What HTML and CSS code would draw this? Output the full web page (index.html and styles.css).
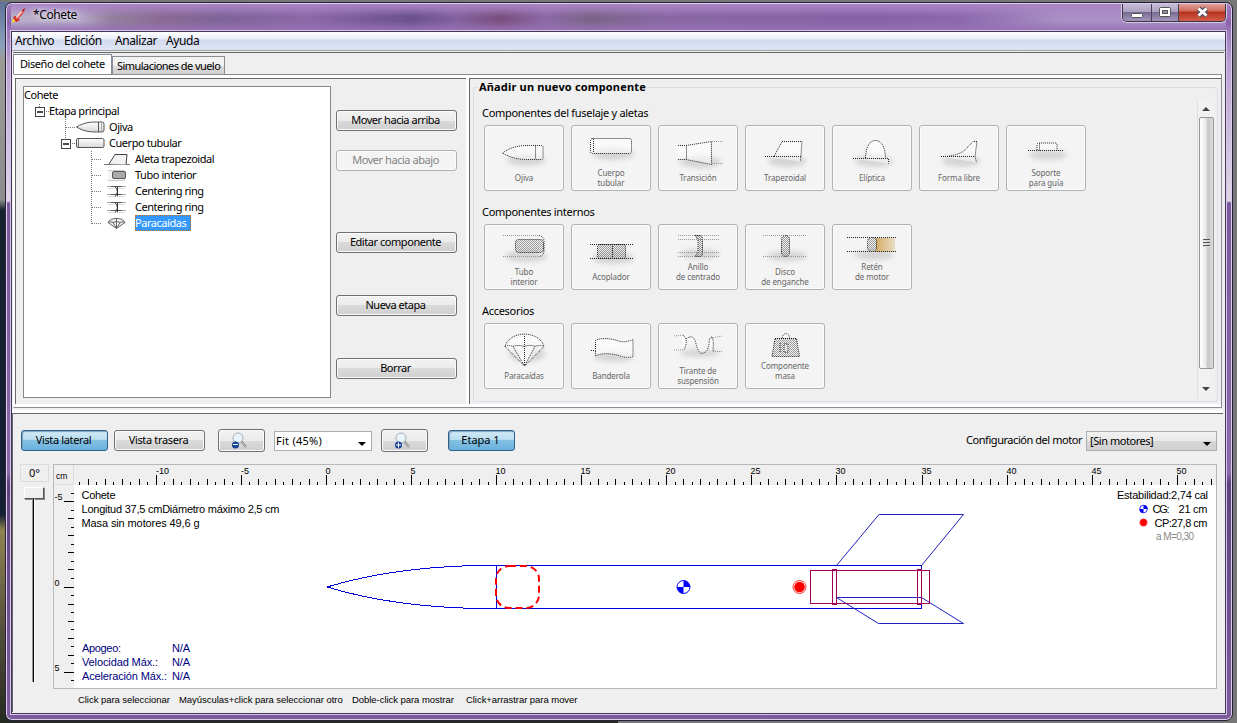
FILE: index.html
```
<!DOCTYPE html>
<html lang="es">
<head>
<meta charset="utf-8">
<title>Cohete</title>
<link rel="stylesheet" href="styles.css">
</head>
<body>
<svg class="defs" width="0" height="0">
  <defs>
    <pattern id="dither" width="2" height="2" patternUnits="userSpaceOnUse"><path d="M0 0h1v1H0zM1 1h1v1H1z" fill="#999"/></pattern>
    <linearGradient id="tan"><stop offset="0" stop-color="#d3ad68"/><stop offset="1" stop-color="#e9dcc4"/></linearGradient>
    <filter id="soft" x="-30%" y="-60%" width="160%" height="220%"><feGaussianBlur stdDeviation="2.5"/></filter>
    <linearGradient id="metal" x1="0" y1="0" x2="0" y2="1"><stop offset="0" stop-color="#fff"/><stop offset="1" stop-color="#d8d8d8"/></linearGradient>
    <symbol id="ring" viewBox="0 0 28 16" overflow="visible"><path d="M4 3.500h19M4 11.500h19" stroke="#aaa"/><path d="M5 5.500h17M5 13.500h17" stroke="#ddd"/><path d="M8 3.500h11M8 11.500h11" stroke="#555"/><path d="M12 3.500c3 2 3 8 0 10M14.500 4v9" stroke="#333" fill="none"/></symbol>
    <symbol id="lens" viewBox="0 0 20 18" overflow="visible"><path d="M11 9l5 6" stroke="#777" stroke-width="2"/><path d="M11 9l5 6" stroke="#ddd"/><circle cx="8" cy="6" r="5" fill="#e8f3fb" stroke="#a4b0ba"/><circle cx="5.500" cy="13" r="3.500" fill="#174395"/></symbol>
  </defs>
</svg>
<div class="window">
  <header class="titlebar">
    <svg class="rocket" width="16" height="16"><path d="M1 15l1-4 3 2-2 1z" fill="#ffd21c"/><path d="M2 9l3-1 4 4-4 2z" fill="#d9201b"/><path d="M4 10L9 4l4-3-1 5-6 6z" fill="#e1574d"/><path d="M5 9l5-6 1 1-5 6z" fill="#fbe9e6"/><path d="M11 2l3-2-1 4z" fill="#c11b17"/></svg>
    <span class="title">*Cohete</span>
    <div class="winbtns">
      <span class="wb min"><svg width="28" height="18"><rect x="8.500" y="9.500" width="11" height="4" rx="1" fill="#fff" stroke="#555"/></svg></span>
      <span class="wb max"><svg width="26" height="18"><rect x="7.500" y="3.500" width="11" height="9" rx="1" fill="#fff" stroke="#555"/><rect x="10.500" y="6.500" width="5" height="3" fill="#968cae" stroke="#555"/></svg></span>
      <span class="wb close"><svg width="46" height="18"><path d="M19.500 4.500l8 7m0-7l-8 7" stroke="#535666" stroke-width="5"/><path d="M19.500 4.500l8 7m0-7l-8 7" stroke="#fff" stroke-width="2.800"/></svg></span>
    </div>
  </header>
  <main class="client">
    <nav class="menu"><span class="m1">Archivo</span><span class="m2">Edición</span><span class="m3">Analizar</span><span class="m4">Ayuda</span></nav>
    <div class="tabs"><div class="tab on">Diseño del cohete</div><div class="tab">Simulaciones de vuelo</div></div>
    <div class="pane">
      <section class="left">
        <div class="tree">
          <svg class="lines" width="100" height="150"><g fill="none" stroke="#777" stroke-dasharray="1 1"><path d="M15.500 17v5M22 24.500h4M41.500 32v26M42 40.500h9M48 56.500h5M67.500 64v73M68 72.500h9M68 88.500h9M68 104.500h9M68 120.500h9M68 136.500h9"/></g><g fill="#fff" stroke="#444"><rect x="11.500" y="20.500" width="9" height="9"/><rect x="37.500" y="52.500" width="9" height="9"/></g><path d="M13 25h6M39 57h6" stroke="#111" stroke-width="1.500"/></svg>
          <div class="row r0">Cohete</div>
          <div class="row r1">Etapa principal</div>
          <div class="row r2"><svg width="29" height="16"><path d="M.5 8C9 3 15 3 23 3h3q2 0 2 2v6q0 2-2 2h-3C15 13 9 13 .5 8zM22.500 3v10" fill="url(#metal)" stroke="#555"/><path d="M25.500 4v8" stroke="#aaa"/></svg><span>Ojiva</span></div>
          <div class="row r2"><svg width="29" height="16"><rect x=".5" y="3.500" width="27.500" height="9" rx="1.500" fill="url(#metal)" stroke="#555"/><path d="M2.500 4v8" stroke="#777"/></svg><span>Cuerpo tubular</span></div>
          <div class="row r3"><svg width="28" height="16"><path d="M1 13.500h26" stroke="#777"/><path d="M6 13l6-9.500h12l-1 10" fill="#f2f2f2" stroke="#444"/></svg><span>Aleta trapezoidal</span></div>
          <div class="row r3"><svg width="28" height="16"><path d="M5 3.500h15q2.500 0 2.500 2v6q0 2-2.500 2H5" stroke="#ccc" fill="#f4f4f4"/><rect x="9.500" y="4.500" width="13" height="7" rx="1.500" fill="#aaa" stroke="#555"/></svg><span>Tubo interior</span></div>
          <div class="row r3"><svg width="28" height="16"><use href="#ring" width="28" height="16"/></svg><span>Centering ring</span></div>
          <div class="row r3"><svg width="28" height="16"><use href="#ring" width="28" height="16"/></svg><span>Centering ring</span></div>
          <div class="row r3"><svg width="28" height="16"><path d="M5 7.500C7 2 20 2 22 7.500L13.500 13.500zM5 7.500q3-1.500 5 0l3.500 6 3.500-6q3-1.500 5 0M10 7.500q3.500-2 7 0M13.500 3.500v10" fill="#eee" stroke="#666"/></svg><span class="sel">Paracaídas</span></div>
        </div>
        <div class="actions">
          <button class="btn">Mover hacia arriba</button>
          <button class="btn off">Mover hacia abajo</button>
          <button class="btn gap">Editar componente</button>
          <button class="btn gap2">Nueva etapa</button>
          <button class="btn gap2">Borrar</button>
        </div>
      </section>
      <section class="right">
        <fieldset class="add">
          <legend>Añadir un nuevo componente</legend>
          <div class="groups">
            <h3>Componentes del fuselaje y aletas</h3>
            <div class="cards">
              <div class="card"><svg><ellipse class="sh" cx="42" cy="35" rx="19" ry="6"/><path class="d" d="M18.500 28C27 22 35 20.500 44 20.500h13.500q1.500 0 1.500 2V33q0 1.500-1.500 1.500H44C35 34.500 27 33 18.500 28zM51.500 20.500v14"/></svg><p>Ojiva</p></div>
              <div class="card two"><svg><ellipse class="sh" cx="42" cy="29" rx="21" ry="6"/><rect class="d" x="19.500" y="13.500" width="41" height="15" rx="2"/><path class="d" d="M22.500 14v14"/></svg><p>Cuerpo<br>tubular</p></div>
              <div class="card"><svg><ellipse class="sh" cx="42" cy="37" rx="21" ry="6"/><path class="d" d="M20 20.500h8l25.500-4v23l-25.500-5h-8M28.500 20.500v14"/><path class="l" d="M54 16.500h12M54 38.500h11"/></svg><p>Transición</p></div>
              <div class="card"><svg><ellipse class="sh" cx="42" cy="36" rx="19" ry="6"/><path class="d" d="M20 31.500h9l8-15h20l-1.500 20M29 31.500h27"/></svg><p>Trapezoidal</p></div>
              <div class="card"><svg><ellipse class="sh" cx="42" cy="36" rx="19" ry="6"/><path class="d" d="M21 33.500h35.500v5M33.500 33C34 21 38 15.500 43.500 15.500S53 21 53.500 33"/></svg><p>Elíptica</p></div>
              <div class="card"><svg><ellipse class="sh" cx="42" cy="36" rx="19" ry="6"/><path class="d" d="M22 31.500h34l1.500 6M30 31Q40 30 46 25L54 16.500h4l-2 15"/></svg><p>Forma libre</p></div>
              <div class="card two"><svg><ellipse class="sh" cx="42" cy="30" rx="19" ry="5"/><path class="d" d="M22 25.500h36M31 25v-5q0-2 2-2h16q2 0 2 2v5M33.500 18.500v7"/></svg><p>Soporte<br>para guía</p></div>
            </div>
            <h3>Componentes internos</h3>
            <div class="cards">
              <div class="card two"><svg><ellipse class="sh" cx="42" cy="32" rx="21" ry="6"/><path class="l" d="M19 11.500h37M19 32.500h37"/><path class="d" d="M55 11.500q5 1 5 6v9q0 5-5 6"/><rect class="d g" x="31.500" y="15.500" width="28" height="13" rx="3"/></svg><p>Tubo<br>interior</p></div>
              <div class="card"><svg><ellipse class="sh" cx="42" cy="34" rx="21" ry="6"/><path class="d" d="M19 20.500h43M19 34.500h43"/><rect class="d g" x="26.500" y="20.500" width="28" height="14" rx="2"/><path class="d" d="M41.500 20v14"/></svg><p>Acoplador</p></div>
              <div class="card up"><svg><ellipse class="sh" cx="42" cy="30" rx="20" ry="5"/><path class="l" d="M20 11.500h42M20 15.500h42M20 28.500h42M20 32.500h42"/><path class="d g" d="M37 11.500h6q1.500 1 1.500 4v13q0 3-1.500 4h-6l3-4v-13z"/></svg><p>Anillo<br>de centrado</p></div>
              <div class="card two"><svg><ellipse class="sh" cx="42" cy="32" rx="20" ry="5"/><path class="l" d="M18 11.500h43M18 32.500h43"/><rect class="d g" x="36.500" y="11.500" width="8" height="21" rx="4"/></svg><p>Disco<br>de enganche</p></div>
              <div class="card up"><svg><ellipse class="sh" cx="42" cy="31" rx="20" ry="5"/><rect x="44" y="14" width="19" height="14" fill="url(#tan)"/><path class="d" d="M15 13.500h49M15 27.500h49"/><rect class="d g" x="35.500" y="13.500" width="9" height="14" rx="4"/></svg><p>Retén<br>de motor</p></div>
            </div>
            <h3>Accesorios</h3>
            <div class="cards">
              <div class="card"><svg><ellipse class="sh" cx="43" cy="31" rx="18" ry="8"/><path class="d" d="M21 23.500C26 7 55 7 60 23.500L40.500 43z"/><path class="d" d="M21 23.500q4-2 8 0 5-2 11 0 6-2 11 0 5-2 9 0M29 23.500L40.500 43 51 23.500M40.500 13v30"/></svg><p>Paracaídas</p></div>
              <div class="card"><svg><ellipse class="sh" cx="43" cy="34" rx="20" ry="5"/><path class="d" d="M20 27.500h4.500V17.500c8-4 19-1 25 1q6 1 12.500-2v17q-6 2-12.500-.5c-7-2-17-4-25 0V27"/></svg><p>Banderola</p></div>
              <div class="card two"><svg><ellipse class="sh" cx="42" cy="30" rx="20" ry="4"/><path class="l" d="M16 13l9-1M16 27h10M53 15l12-2M55 28.500h10"/><path class="d" d="M25 12q6 5 1 15M28 16q8-6 10 5 3 11 7 9 5-1 6-9 0-7 3-7 2 3 1 14"/></svg><p>Tirante de<br>suspensión</p></div>
              <div class="card up"><svg><path class="d g" d="M30 15.500h21.500l3 18H27z"/><path class="d" d="M37.500 15q0-4 3.500-4.500 3.500.5 3.500 4.500M35 20v9M39 21h4v8h-4z"/></svg><p>Componente<br>masa</p></div>
            </div>
          </div>
          <div class="scroll"><i class="arrow upa"></i><div class="thumb"><b></b><b></b><b></b></div><i class="arrow"></i></div>
        </fieldset>
      </section>
    </div>
    <section class="view">
      <div class="tools">
        <button class="btn blue w87">Vista lateral</button>
        <button class="btn w91">Vista trasera</button>
        <button class="btn zoom"><svg width="20" height="18"><use href="#lens" width="20" height="18"/><path d="M3 12.500h5" stroke="#fff" stroke-width="1"/></svg></button>
        <div class="combo fit">Fit (45%)<i></i></div>
        <button class="btn zoom z2"><svg width="20" height="18"><use href="#lens" width="20" height="18"/><path d="M3 13h5M5.500 10.500v5" stroke="#fff"/></svg></button>
        <button class="btn blue w67">Etapa 1</button>
        <span class="conf">Configuración del motor</span>
        <div class="combo motor">[Sin motores]<i></i></div>
      </div>
      <div class="stage">
        <div class="rot"><div class="deg">0°</div><div class="knob"></div><div class="track"></div></div>
        <svg class="plot" width="1164" height="225" viewBox="53 464 1164 225">
          <rect x="53" y="464" width="1164" height="225" fill="#efefef"/>
          <rect x="74" y="485" width="1142" height="203" fill="#fff"/>
          <rect x="53.500" y="464.500" width="1163" height="224" fill="none" stroke="#b8b8b8"/>
          <path d="M54 484.500h20M73.500 465v20" stroke="#dcdcdc"/>
          <text x="56" y="479" font-size="8.500">cm</text>
          <g id="ruler"></g>
          <g fill="none" stroke="#0000dc" shape-rendering="crispEdges">
            <path d="M327 587C370 574 425 566.500 478 565.500H921.500V608.500H478C425 607.500 370 600 327 587M496.500 565.500v43"/>
          </g>
          <g fill="none" stroke="#2020c0"><path d="M836.500 565.500L879 514.500h84.500L921.500 565.500M836.500 597.500L878.500 623.500h85L921.500 597.500z"/></g>
          <g fill="none" stroke="#a0005a" shape-rendering="crispEdges"><rect x="810.500" y="570.500" width="119" height="33"/><rect x="832.500" y="569.500" width="4" height="35"/><rect x="917.500" y="569.500" width="4" height="35"/></g>
          <rect x="496" y="566" width="43" height="42" rx="13" fill="none" stroke="#f00" stroke-width="2" stroke-dasharray="7 4"/>
          <g id="cg"><circle cx="683.500" cy="587" r="6.500" fill="#fff" stroke="#00f"/><path d="M683.500 587v-6.500a6.500 6.500 0 0 1 6.500 6.500zM683.500 587v6.500a6.500 6.500 0 0 1-6.500-6.500z" fill="#00f"/></g>
          <circle cx="799.500" cy="587" r="6.500" fill="#fff" stroke="#f33"/><circle cx="799.500" cy="587" r="5.300" fill="#f00"/>
          <g font-size="11">
            <text x="81.500" y="499" textLength="34">Cohete</text>
            <text x="81.500" y="513" textLength="198">Longitud 37,5 cmDiámetro máximo 2,5 cm</text>
            <text x="81.500" y="527" textLength="118">Masa sin motores 49,6 g</text>
            <text x="1117" y="499" textLength="91">Estabilidad:2,74 cal</text>
            <text x="1152.500" y="513" textLength="17">CG:</text><text x="1178.500" y="513" textLength="29">21 cm</text>
            <text x="1154.500" y="527" textLength="53">CP:27,8 cm</text>
            <text x="1156" y="540" font-size="10" fill="#888" textLength="38">a M=0,30</text>
            <g fill="#000080">
              <text x="82" y="652" textLength="39">Apogeo:</text><text x="172" y="652" textLength="18">N/A</text>
              <text x="82" y="666" textLength="76">Velocidad Máx.:</text><text x="172" y="666" textLength="18">N/A</text>
              <text x="82" y="680" textLength="85">Aceleración Máx.:</text><text x="172" y="680" textLength="18">N/A</text>
            </g>
          </g>
          <circle cx="1143.500" cy="509" r="3.800" fill="#fff" stroke="#33f"/><path d="M1143.500 509v-4a4 4 0 0 1 4 4zM1143.500 509v4a4 4 0 0 1-4-4z" fill="#00f"/>
          <circle cx="1143.500" cy="522.500" r="4.300" fill="#f99"/><circle cx="1143.500" cy="522.500" r="3.400" fill="#f00"/>
        </svg>
      </div>
      <footer class="hints"><span class="h1">Click para seleccionar</span><span class="h2">Mayúsculas+click para seleccionar otro</span><span class="h3">Doble-click para mostrar</span><span class="h4">Click+arrastrar para mover</span></footer>
    </section>
  </main>
</div>
<script src="ruler.js"></script>
</body>
</html>
```
FILE: ruler.js
```
// Ruler ticks every half centimetre; labels every five centimetres.
const scale = 17.015, originX = 326.5, originY = 587;
const ruler = document.getElementById("ruler");
let ticks = "", labels = "";
for (let h = -29; h <= 104; h++) {
  const x = Math.floor(originX + h / 2 * scale) + 0.5;
  const len = h % 10 === 0 ? 10 : h % 2 === 0 ? 6 : 3;
  ticks += `M${x} 485v${-len}`;
  if (h % 10 === 0) labels += `<text x="${x - (h < 0 ? 0.5 : 1)}" y="474">${h / 2}</text>`;
}
for (let h = -11; h <= 11; h++) {
  const y = Math.floor(originY + h / 2 * scale) + 0.5;
  const len = h % 10 === 0 ? 10 : h % 2 === 0 ? 6 : 3;
  ticks += `M74 ${y}h${-len}`;
  if (h % 10 === 0) labels += `<text x="54.500" y="${y - 1.5}">${h / 2}</text>`;
}
ruler.innerHTML = `<path d="${ticks}" stroke="#000" shape-rendering="crispEdges"/><g font-size="9">${labels}</g>`;
```
FILE: styles.css
```
* { box-sizing: border-box; }
body { margin: 0; width: 1237px; height: 723px; overflow: hidden; padding: 2px 4px 2px 5px; font: 11px/14px "Noto Sans", sans-serif; letter-spacing: -0.45px; color: #000;
  background: linear-gradient(#777 0 2px, transparent 2px) , linear-gradient(90deg, transparent 50%, #777 50%) , linear-gradient(#5c6f96 0, #8aa0bb 45px, #9b9b96 60px, #8c8c8c 200px, #16202f 210px, #142033 515px, #8e8350 530px, #5a5440 620px, #252a20 100%); }
svg { display: block; overflow: visible; flex: none; }
.defs { position: absolute; }
.window { height: 719px; border: 1px solid #2b2038; border-radius: 7px; padding: 0 6px 6px 5px; box-shadow: inset 0 0 0 1px #dccfe9;
  background: linear-gradient(#a07cbe 0, #8c63aa 20px, #9b78bb 28px, #b9a0d2 60px, #ded6e8 198px, #7a5a9c 200px, #8b69aa 470px, #5d4380 480px, #7d5c9e 100%); }
.titlebar { height: 27px; display: flex; align-items: flex-start; margin: 1px 0 -1px; background: linear-gradient(#a984c6 0, #a984c680 7px, transparent 12px, transparent 17px, #9771b5cc 25px), linear-gradient(90deg, #b8b0c9 0, #b4a6c6 70px, #94809f 100px, #8b6b94 150px, #806499 210px, #8d68a8 300px, #6b5090 400px, #8562a0 445px, #7a507e 490px, #8d69a6 535px, #7c6488 580px, #8a68a4 650px, #8761a6 850px, #8d68ae 950px, #a98fc4 1050px, #a98fc4 100%); }
.rocket { margin: 4px 0 0 0; }
.title { font-size: 12px; letter-spacing: -0.4px; margin: 4px 0 0 6px; flex: 1; text-shadow: 0 0 6px #fff, 0 0 4px #ffffffaa; }
.winbtns { display: flex; height: 18px; border: 1px solid #3b3348; border-top: 0; border-radius: 0 0 5px 5px; overflow: hidden; box-shadow: 0 0 0 1px #d5cae4; }
.wb { background: linear-gradient(#c9bdd9, #a99fbe 8px, #766a90 8px, #a494bb); border-right: 1px solid #4b4159; }
.close { border: 0; background: linear-gradient(#e1a198, #cd6a5a 7px, #b7311d 8px, #d25e49); }
.client { height: 683px; width: 1215px; margin-top: 1px; border: 1px solid #46365a; background: #efefef; box-shadow: 0 0 0 1px #d5c5e7; padding: 0 1px; }
.menu { height: 19px; margin: 0 -1px; background: linear-gradient(#fff, #e9edf7 7px, #d3daee 8px, #dfe5f5); border-bottom: 1px solid #a0a0a0; display: flex; padding: 2px 0 0 3px; font-size: 12px; letter-spacing: -0.4px; }
.m1 { width: 49px; } .m2 { width: 51px; } .m3 { width: 51px; }
.tabs { height: 22px; border-top: 1px solid #666; margin-top: 1px; display: flex; align-items: flex-end; }
.tab { height: 18px; width: 113px; border: 1px solid #898c95; border-bottom: 0; background: linear-gradient(#f3f3f3 50%, #dcdcdc 50%, #d0d0d0); padding: 2px 0 0 4px; white-space: nowrap; letter-spacing: -0.55px; }
.tab.on { width: 99px; height: 20px; background: #fff; padding: 2px 0 0 6px; letter-spacing: -0.45px; }
.pane { height: 334px; width: 1209px; border: 1px solid #898c95; border-left-color: #fff; background: #fff; padding: 3px 0 3px 1px; display: flex; gap: 3px; }
.left { width: 451px; height: 326px; background: #efefef; border: solid #666; border-width: 1px 0 0 1px; padding: 7px 0 0 7px; display: flex; }
.tree { width: 308px; height: 312px; background: #fff; border: 1px solid #828790; position: relative; }
.lines { position: absolute; left: 0; top: 0; }
.row { height: 16px; display: flex; align-items: center; white-space: nowrap; position: relative; }
.r1 { padding-left: 25px; } .r2 { padding-left: 52px; } .r2 svg { margin-right: 4px; } .r3 { padding-left: 79px; } .r3 svg { margin-right: 4px; }
.sel { background: #3399ff; color: #fff; outline: 1px dotted #d07010; outline-offset: -1px; width: 56px; height: 16px; line-height: 16px; }
.actions { padding: 24px 0 0 5px; width: 126px; display: flex; flex-direction: column; }
.btn { font: inherit; letter-spacing: inherit; color: #000; height: 21px; padding: 0 2px 1px 0; border: 1px solid #707070; border-radius: 3px; box-shadow: inset 0 0 0 1px #fafafa; background: linear-gradient(#f2f2f2, #ebebeb 50%, #dadada 50%, #cfcfcf); white-space: nowrap; display: flex; align-items: center; justify-content: center; }
.off { margin-top: 19px; color: #838383; border-color: #adb2b5; background: #f4f4f4; }
.gap { margin-top: 61px; } .gap2 { margin-top: 42px; }
.right { width: 752px; height: 326px; background: #efefef; border: solid #666; border-width: 1px 0 0 1px; padding: 1px 2px 0 3px; }
.add { height: 322px; width: 745px; margin: 0; padding: 0; border: 1px solid #d5dfe5; border-radius: 3px; display: flex; justify-content: space-between; }
legend { font-weight: bold; padding: 0 1px; margin-left: 4px; letter-spacing: 0.17px; height: 14px; }
.groups { padding: 12px 0 0 10px; }
h3 { font: inherit; margin: 0 0 5px -2px; height: 14px; letter-spacing: -0.3px; }
.cards { display: flex; gap: 7px; height: 66px; margin-bottom: 14px; }
.card { width: 80px; height: 66px; border: 1px solid #adb2b5; border-radius: 3px; box-shadow: inset 0 0 0 1px #fcfcfc; background: #f4f4f4; color: #666; }
.card svg { width: 78px; height: 47px; margin: -1px 0 0 -1px; }
.card.two svg { height: 42px; } .card.up svg { height: 37px; }
.card p { margin: 1px 0 0; text-align: center; font-size: 8px; line-height: 10px; letter-spacing: -0.1px; }
.d { fill: #ffffff80; stroke: #222; stroke-dasharray: 1 1; }
.g { fill: url(#dither); }
.l { fill: none; stroke: #999; stroke-dasharray: 1 1; }
.sh { fill: #bbb; opacity: .55; filter: url(#soft); }
.scroll { width: 17px; margin: 5px 3px 0 0; height: 299px; background: #f1f1f1; border-left: 1px solid #e0e0e0; display: flex; flex-direction: column; align-items: center; }
.arrow { border: 4px solid transparent; border-top-color: #444; border-bottom: 0; margin: auto 0 7px; }
.upa { border-top: 0; border-bottom: 4px solid #444; margin: 8px 0 6px; }
.thumb { width: 15px; height: 252px; border: 1px solid #979797; border-radius: 2px; background: linear-gradient(90deg, #fff, #e9e9e9 45%, #c6c6c8 60%, #dcdcdc); display: flex; flex-direction: column; align-items: center; justify-content: center; gap: 1px; }
.thumb b { width: 7px; height: 2px; background: #555; border-bottom: 1px solid #ddd; }
.view { margin-top: 5px; height: 299px; border-top: 1px solid #666; box-shadow: 0 -3px 0 #fff, 0 -4px 0 #f4f4f4; width: 1211px; border-left: 1px solid #666; margin-left: -1px; }
.tools { height: 50px; padding: 15px 6px 0 8px; display: flex; align-items: flex-start; }
.tools .btn { margin-top: 1px; letter-spacing: -0.35px; }
.blue { border-color: #2c628b; background: linear-gradient(#d3eaf5, #b5dcf0 50%, #83c1e3 50%, #6ab0dc); box-shadow: inset 1px 1px 1px #7aa0b5; }
.w87 { width: 87px; } .tools .w91 { width: 91px; margin-left: 6px; } .tools .w67 { width: 67px; margin-left: 20px; letter-spacing: 0; }
.tools .zoom { width: 47px; height: 23px; margin: 0 0 0 13px; padding: 0 4px 0 0; }
.tools .z2 { margin-left: 9px; }
.combo { height: 20px; border: 1px solid #abadb3; background: #fff; margin: 2px 0 0 9px; width: 98px; padding: 2px 5px 0 1px; display: flex; justify-content: space-between; }
.fit { letter-spacing: 0.25px; }
.combo i { border: 4px solid transparent; border-top-color: #000; border-bottom: 0; margin-top: 8px; }
.conf { margin: 4px 4px 0 auto; }
.motor { width: 131px; margin-left: 0; background: linear-gradient(#f2f2f2, #e8e8e8 50%, #d8d8d8 50%, #d0d0d0); padding-left: 3px; }
.stage { display: flex; height: 225px; padding-left: 7px; }
.rot { width: 33px; display: flex; flex-direction: column; align-items: flex-start; }
.deg { width: 29px; height: 18px; border: 1px solid #dcdcdc; text-align: center; padding-top: 1px; letter-spacing: 0; }
.knob { width: 20px; height: 12px; margin: 5px 0 0 4px; border: 1px solid #fff; border-right-color: #555; border-bottom-color: #555; background: #efefef; box-shadow: 1px 1px 0 #888; }
.track { width: 3px; height: 183px; margin-left: 12px; border-left: 1px solid #999; background: linear-gradient(90deg, #000 1px, #fff 1px); }
.plot { font-family: "Liberation Sans", Arial, sans-serif; letter-spacing: 0; }
.hints { font: 9.500px/12px "Liberation Sans", Arial, sans-serif; letter-spacing: -0.05px; display: flex; padding: 5px 0 0 65px; white-space: nowrap; }
.h1 { width: 101px; } .h2 { width: 173px; } .h3 { width: 114px; }
```
